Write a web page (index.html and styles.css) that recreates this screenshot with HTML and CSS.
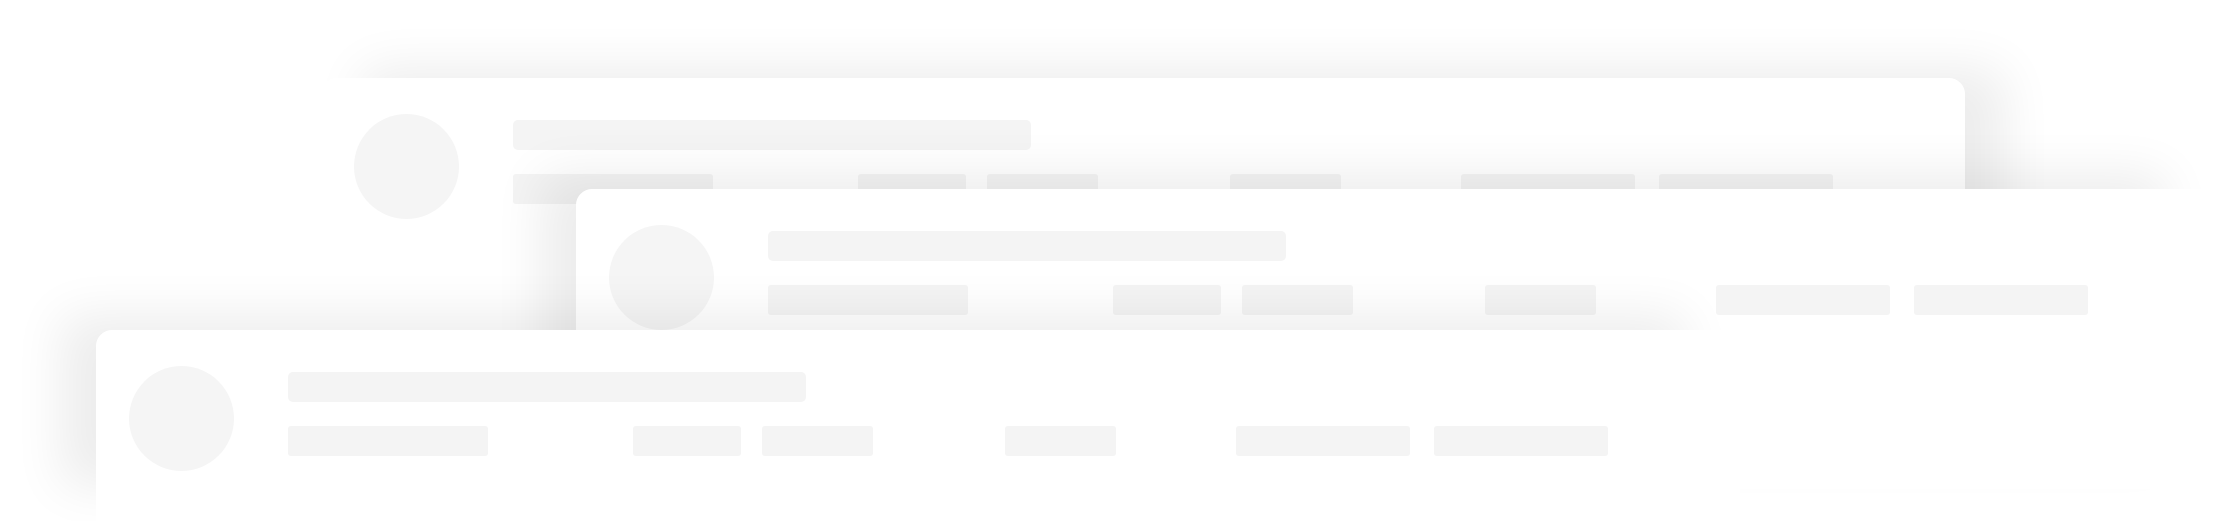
FILE: index.html
```html
<!DOCTYPE html>
<html lang="en">
<head>
    <meta charset="UTF-8">
    <title>Loading</title>
    <link rel="stylesheet" href="styles.css">
</head>
<body>
<div class="stack">
    <div class="card card-back">
        <div class="avatar"></div>
        <div class="lines">
            <div class="line line-title"></div>
            <div class="cells">
                <div class="cell"><div class="line w-200"></div></div>
                <div class="cell"><div class="line w-108"></div></div>
                <div class="cell"><div class="line w-111"></div></div>
                <div class="cell"><div class="line w-111"></div></div>
                <div class="cell"><div class="line w-174"></div></div>
                <div class="cell"><div class="line w-174"></div></div>
            </div>
        </div>
    </div>
    <div class="card card-middle">
        <div class="avatar"></div>
        <div class="lines">
            <div class="line line-title"></div>
            <div class="cells">
                <div class="cell"><div class="line w-200"></div></div>
                <div class="cell"><div class="line w-108"></div></div>
                <div class="cell"><div class="line w-111"></div></div>
                <div class="cell"><div class="line w-111"></div></div>
                <div class="cell"><div class="line w-174"></div></div>
                <div class="cell"><div class="line w-174"></div></div>
            </div>
        </div>
    </div>
    <div class="card card-front">
        <div class="avatar"></div>
        <div class="lines">
            <div class="line line-title"></div>
            <div class="cells">
                <div class="cell"><div class="line w-200"></div></div>
                <div class="cell"><div class="line w-108"></div></div>
                <div class="cell"><div class="line w-111"></div></div>
                <div class="cell"><div class="line w-111"></div></div>
                <div class="cell"><div class="line w-174"></div></div>
                <div class="cell"><div class="line w-174"></div></div>
            </div>
        </div>
    </div>
</div>
</body>
</html>
```

FILE: styles.css
```css
html, body {
    margin: 0;
    padding: 0;
    height: 100%;
    overflow: hidden;
    background: #fff;
    font-family: 'Liberation Sans', Arial, sans-serif;
}

.stack {
    position: relative;
    height: 100vh;
    overflow: hidden;
}

/* the three cards overlap, so they sit on the canvas */
.card {
    position: absolute;
    width: 1644px;
    height: 191px;
    box-sizing: border-box;
    padding: 36px 0 0 33px;
    display: flex;
    align-items: flex-start;
    gap: 54px;
    background: #fff;
    border-radius: 16px;
    box-shadow: -45px -25px 50px -10px rgba(0, 0, 0, 0.075);
}

.card-back {
    left: 321px;
    top: 78px;
    height: 300px;
    box-shadow: 40px -10px 50px 0 rgba(0, 0, 0, 0.075);
}

.card-middle {
    left: 576px;
    top: 189px;
    height: 300px;
}

.card-front {
    left: 96px;
    top: 330px;
    border-radius: 16px 16px 0 0;
}

.avatar {
    flex: none;
    width: 105px;
    height: 105px;
    border-radius: 50%;
    background: #f5f5f5;
}

.lines {
    padding-top: 6px;
    display: flex;
    flex-direction: column;
    gap: 24px;
}

.line {
    height: 30px;
    border-radius: 3px;
    background: #f4f4f4;
}

.line-title {
    width: 518px;
    border-radius: 5px;
}

.cells {
    display: grid;
    grid-template-columns: 345px 129px 243px 231px 198px 174px;
}

.w-200 { width: 200px; }
.w-108 { width: 108px; }
.w-111 { width: 111px; }
.w-174 { width: 174px; }
```
